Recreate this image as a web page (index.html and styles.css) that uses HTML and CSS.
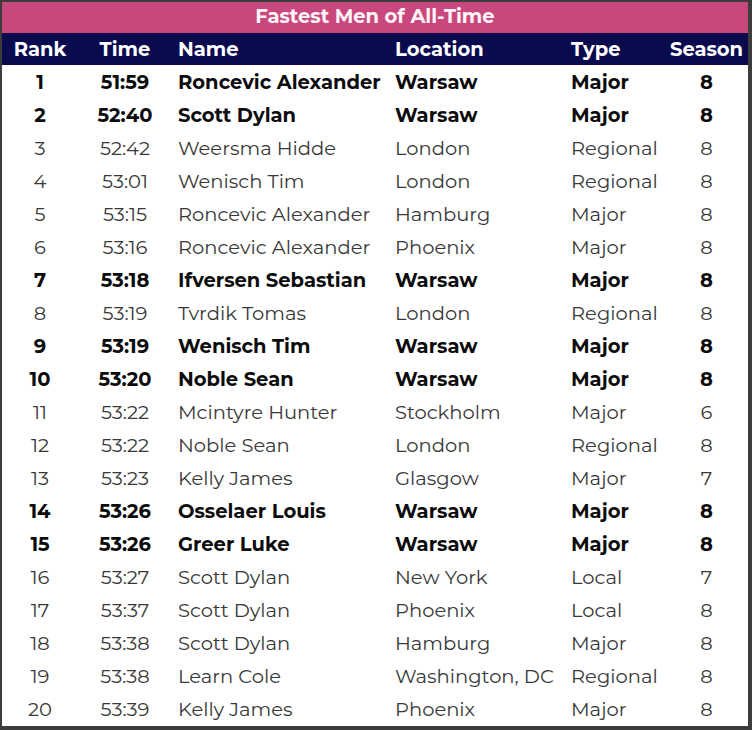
FILE: index.html
```html
<!DOCTYPE html>
<html>
<head>
<meta charset="utf-8">
<link rel="stylesheet" href="styles.css">
</head>
<body>
<div class="frame">
  <div class="title">Fastest Men of All-Time</div>
  <table class="tbl">
    <colgroup>
      <col class="c-rank"><col class="c-time"><col class="c-name"><col class="c-loc"><col class="c-type"><col class="c-season">
    </colgroup>
    <thead>
      <tr><th class="ctr">Rank</th><th class="ctr">Time</th><th>Name</th><th>Location</th><th>Type</th><th class="ctr">Season</th></tr>
    </thead>
    <tbody>
      <tr class="b"><td class="ctr">1</td><td class="ctr">51:59</td><td>Roncevic Alexander</td><td>Warsaw</td><td>Major</td><td class="ctr">8</td></tr>
      <tr class="b"><td class="ctr">2</td><td class="ctr">52:40</td><td>Scott Dylan</td><td>Warsaw</td><td>Major</td><td class="ctr">8</td></tr>
      <tr><td class="ctr">3</td><td class="ctr">52:42</td><td>Weersma Hidde</td><td>London</td><td>Regional</td><td class="ctr">8</td></tr>
      <tr><td class="ctr">4</td><td class="ctr">53:01</td><td>Wenisch Tim</td><td>London</td><td>Regional</td><td class="ctr">8</td></tr>
      <tr><td class="ctr">5</td><td class="ctr">53:15</td><td>Roncevic Alexander</td><td>Hamburg</td><td>Major</td><td class="ctr">8</td></tr>
      <tr><td class="ctr">6</td><td class="ctr">53:16</td><td>Roncevic Alexander</td><td>Phoenix</td><td>Major</td><td class="ctr">8</td></tr>
      <tr class="b"><td class="ctr">7</td><td class="ctr">53:18</td><td>Ifversen Sebastian</td><td>Warsaw</td><td>Major</td><td class="ctr">8</td></tr>
      <tr><td class="ctr">8</td><td class="ctr">53:19</td><td>Tvrdik Tomas</td><td>London</td><td>Regional</td><td class="ctr">8</td></tr>
      <tr class="b"><td class="ctr">9</td><td class="ctr">53:19</td><td>Wenisch Tim</td><td>Warsaw</td><td>Major</td><td class="ctr">8</td></tr>
      <tr class="b"><td class="ctr">10</td><td class="ctr">53:20</td><td>Noble Sean</td><td>Warsaw</td><td>Major</td><td class="ctr">8</td></tr>
      <tr><td class="ctr">11</td><td class="ctr">53:22</td><td>Mcintyre Hunter</td><td>Stockholm</td><td>Major</td><td class="ctr">6</td></tr>
      <tr><td class="ctr">12</td><td class="ctr">53:22</td><td>Noble Sean</td><td>London</td><td>Regional</td><td class="ctr">8</td></tr>
      <tr><td class="ctr">13</td><td class="ctr">53:23</td><td>Kelly James</td><td>Glasgow</td><td>Major</td><td class="ctr">7</td></tr>
      <tr class="b"><td class="ctr">14</td><td class="ctr">53:26</td><td>Osselaer Louis</td><td>Warsaw</td><td>Major</td><td class="ctr">8</td></tr>
      <tr class="b"><td class="ctr">15</td><td class="ctr">53:26</td><td>Greer Luke</td><td>Warsaw</td><td>Major</td><td class="ctr">8</td></tr>
      <tr><td class="ctr">16</td><td class="ctr">53:27</td><td>Scott Dylan</td><td>New York</td><td>Local</td><td class="ctr">7</td></tr>
      <tr><td class="ctr">17</td><td class="ctr">53:37</td><td>Scott Dylan</td><td>Phoenix</td><td>Local</td><td class="ctr">8</td></tr>
      <tr><td class="ctr">18</td><td class="ctr">53:38</td><td>Scott Dylan</td><td>Hamburg</td><td>Major</td><td class="ctr">8</td></tr>
      <tr><td class="ctr">19</td><td class="ctr">53:38</td><td>Learn Cole</td><td>Washington, DC</td><td>Regional</td><td class="ctr">8</td></tr>
      <tr><td class="ctr">20</td><td class="ctr">53:39</td><td>Kelly James</td><td>Phoenix</td><td>Major</td><td class="ctr">8</td></tr>
    </tbody>
  </table>
</div>
</body>
</html>
```
FILE: styles.css
```css
html, body {
  margin: 0;
  padding: 0;
  background: #ffffff;
}
body {
  font-family: Montserrat, "DejaVu Sans", sans-serif;
}
.frame {
  width: 752px;
  height: 730px;
  box-sizing: border-box;
  border: 2px solid #3c3c3c;
  border-bottom-width: 4px;
  border-right-width: 4px;
  background: #fff;
  overflow: hidden;
}
.title {
  height: 31px;
  background: #c8487d;
  color: #fff4f8;
  font-weight: bold;
  font-size: 19.5px;
  text-align: center;
  line-height: 28px;
}
.tbl {
  border-collapse: collapse;
  table-layout: fixed;
  width: 746px;
}
.c-rank { width: 76px; }
.c-time { width: 94px; }
.c-name { width: 217px; }
.c-loc { width: 176px; }
.c-type { width: 100px; }
.c-season { width: 83px; }
.tbl th {
  height: 32px;
  background: #0a0a4e;
  color: #ffffff;
  font-weight: bold;
  font-size: 19.5px;
  text-align: left;
  padding: 0 0 0 6px;
  white-space: nowrap;
}
.tbl td {
  height: 33px;
  padding: 0 0 0 6px;
  font-size: 19.5px;
  color: #383838;
  white-space: nowrap;
}
.tbl .ctr {
  text-align: center;
  padding: 0;
}
.tbl tr.b td {
  font-weight: bold;
  color: #0c0c0c;
}
```
